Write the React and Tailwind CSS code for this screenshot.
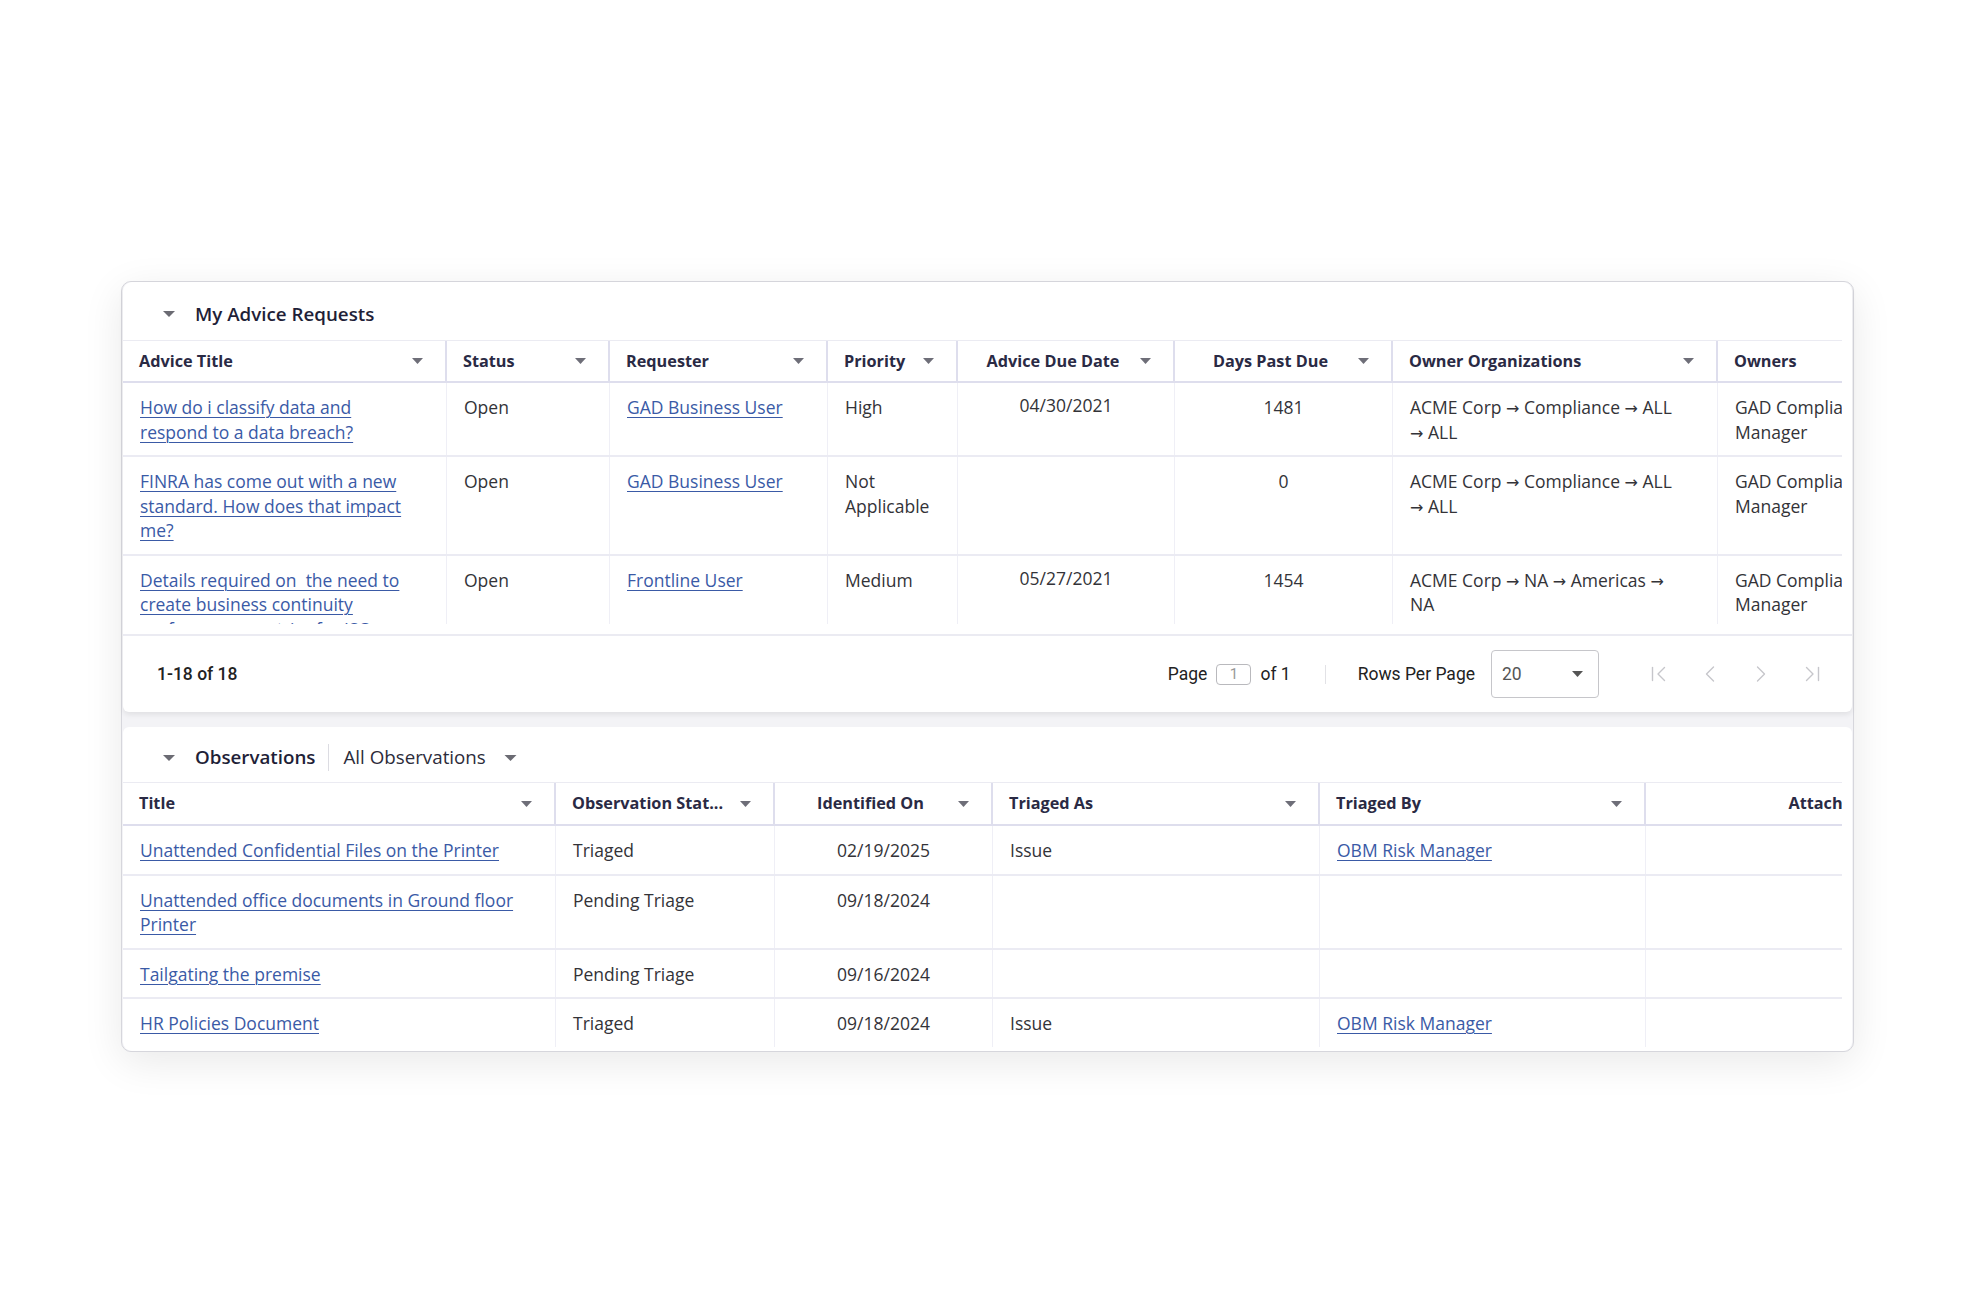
import { ChevronLeft, ChevronRight } from "lucide-react";

const adviceCols = "grid grid-cols-[324px_163px_218px_130px_217px_218px_325px_200px] w-[1795px]";
const obsCols = "grid grid-cols-[433px_219px_218px_327px_326px_270px] w-[1793px]";

const adviceHeaders = [
  { label: "Advice Title", sort: true },
  { label: "Status", sort: true },
  { label: "Requester", sort: true },
  { label: "Priority", sort: true },
  { label: "Advice Due Date", sort: true, align: "center" },
  { label: "Days Past Due", sort: true, align: "center" },
  { label: "Owner Organizations", sort: true },
  { label: "Owners", sort: false },
];

const adviceRows = [
  {
    title: "How do i classify data and respond to a data breach?",
    status: "Open",
    requester: "GAD Business User",
    priority: "High",
    due: "04/30/2021",
    days: "1481",
    org: ["ACME Corp", "Compliance", "ALL", "ALL"],
    owners: "GAD Compliance Manager",
  },
  {
    title: "FINRA has come out with a new standard. How does that impact me?",
    status: "Open",
    requester: "GAD Business User",
    priority: "Not Applicable",
    due: "",
    days: "0",
    org: ["ACME Corp", "Compliance", "ALL", "ALL"],
    owners: "GAD Compliance Manager",
  },
  {
    title: "Details required on\u00a0 the need to create business continuity performance metrics for ISO 22301",
    status: "Open",
    requester: "Frontline User",
    priority: "Medium",
    due: "05/27/2021",
    days: "1454",
    org: ["ACME Corp", "NA", "Americas", "NA"],
    owners: "GAD Compliance Manager",
  },
];

const obsHeaders = [
  { label: "Title", sort: true },
  { label: "Observation Stat...", sort: true },
  { label: "Identified On", sort: true, align: "center" },
  { label: "Triaged As", sort: true },
  { label: "Triaged By", sort: true },
  { label: "Attachments", sort: false, align: "right" },
];

const obsRows = [
  { title: "Unattended Confidential Files on the Printer", status: "Triaged", date: "02/19/2025", as: "Issue", by: "OBM Risk Manager" },
  { title: "Unattended office documents in Ground floor Printer", status: "Pending Triage", date: "09/18/2024", as: "", by: "" },
  { title: "Tailgating the premise", status: "Pending Triage", date: "09/16/2024", as: "", by: "" },
  { title: "HR Policies Document", status: "Triaged", date: "09/18/2024", as: "Issue", by: "OBM Risk Manager" },
];

function SortArrow() {
  return (
    <svg width="11" height="6" viewBox="0 0 11 6" className="shrink-0">
      <path d="M0 0h11L5.5 6z" fill="#6e6e78" />
    </svg>
  );
}

function Caret({ w = 12 }) {
  return (
    <svg width={w} height="6" viewBox="0 0 12 6" className="shrink-0">
      <path d="M0 0h12L6 6z" fill="#6b6b73" />
    </svg>
  );
}

function HeaderCell({ label, sort, align, last }) {
  const alignCls = align === "center" ? "text-center" : align === "right" ? "text-right" : "text-left";
  return (
    <div className={`flex items-center gap-2 pl-[16px] pr-[22px] ${last ? "" : "border-r-2 border-[#dedeed]"}`}>
      <span className={`flex-1 whitespace-nowrap ${alignCls}`}>{label}</span>
      {sort && <SortArrow />}
    </div>
  );
}

function Link({ children }) {
  return <a href="#" className="text-[#3a5aa6] underline underline-offset-[3px] decoration-1">{children}</a>;
}

function Cell({ children, center, last, wide, tight }) {
  const pr = wide ? "pr-[40px]" : tight ? "pr-[36px]" : "pr-[22px]";
  return (
    <div
      className={`pt-[12px] pb-[11px] ${center ? "text-center" : `pl-[17px] ${pr}`} ${last ? "" : "border-r border-[#efeff6]"}`}
    >
      {children}
    </div>
  );
}

// org path with the long arrow glyph
function OrgPath({ parts }) {
  return (
    <>
      {parts.map((p, i) => (
        <span key={i}>
          {i > 0 && (
            <>
              {" "}
              <span className="font-['DejaVu_Sans',sans-serif] text-[16px] leading-none">→</span>{" "}
            </>
          )}
          {p}
        </span>
      ))}
    </>
  );
}

function IconFirst() {
  return (
    <svg width="16" height="16" viewBox="0 0 16 16" fill="none" stroke="#c6c6cb" strokeWidth="1.4" strokeLinecap="round" strokeLinejoin="round">
      <path d="M1.5 1.5v13" />
      <path d="M13.5 1.5L7 8l6.5 6.5" />
    </svg>
  );
}

function IconLast() {
  return (
    <svg width="16" height="16" viewBox="0 0 16 16" fill="none" stroke="#c6c6cb" strokeWidth="1.4" strokeLinecap="round" strokeLinejoin="round">
      <path d="M14.5 1.5v13" />
      <path d="M2.5 1.5L9 8l-6.5 6.5" />
    </svg>
  );
}

export default function App() {
  return (
    <div className="min-h-screen bg-white pt-[281px] font-['Open_Sans',sans-serif]">
      <div className="mx-auto w-[1733px] rounded-[10px] border border-[#d6d6dc] bg-[#f3f3f6] px-px shadow-[0_10px_40px_rgba(0,0,0,0.09)]">
        {/* My Advice Requests */}
        <div className="rounded-t-[9px] rounded-b-[6px] bg-white shadow-[0_3px_5px_rgba(0,0,0,0.07)]">
          <div className="flex h-[58px] items-center gap-[20px] pl-[40px] pt-[6px]">
            <Caret />
            <span className="text-[18.75px] font-semibold text-[#1f1f38]">My Advice Requests</span>
          </div>

          <div className="mr-[10px] h-[284px] overflow-hidden">
            <div className={`${adviceCols} h-[43px] border-t border-b-2 border-t-[#ebebf2] border-b-[#dedeed] text-[16.25px] font-bold text-[#2a2a44]`}>
              {adviceHeaders.map((h, i) => (
                <HeaderCell key={h.label} {...h} last={i === adviceHeaders.length - 1} />
              ))}
            </div>
            {adviceRows.map((r) => (
              <div key={r.title} className={`${adviceCols} border-b-2 border-[#ebebf3] text-[17.5px] leading-[24.5px] text-[#333338]`}>
                <Cell wide><Link>{r.title}</Link></Cell>
                <Cell>{r.status}</Cell>
                <Cell><Link>{r.requester}</Link></Cell>
                <Cell>{r.priority}</Cell>
                <Cell center>
                  <span className="relative -top-[2px]">{r.due}</span>
                </Cell>
                <Cell center>{r.days}</Cell>
                <Cell tight><OrgPath parts={r.org} /></Cell>
                <Cell last>{r.owners}</Cell>
              </div>
            ))}
          </div>
          <div className="h-[10px]" />

          {/* pagination */}
          <div className="flex h-[78px] items-center border-t-2 border-[#ebebf2] pl-[34px] pr-[15px] font-['Roboto',sans-serif] text-[17.5px] text-[#222]">
            <span className="font-medium">1-18 of 18</span>
            <div className="ml-auto flex items-center">
              <span>Page</span>
              <span className="ml-[9px] flex h-[21px] w-[35px] items-center justify-center rounded-[4px] border border-[#b9b9bd] text-[15px] text-[#999]">1</span>
              <span className="ml-[9px]">of 1</span>
              <span className="ml-[34px] h-[19px] w-px bg-[#e2e2e6]" />
              <span className="ml-[32px]">Rows Per Page</span>
              <div className="ml-[16px] flex h-[48px] w-[108px] items-center justify-between rounded-[4px] border border-[#c6c6ca] pl-[10px] pr-[15px] text-[#555]">
                <span>20</span>
                <svg width="11" height="6" viewBox="0 0 11 6">
                  <path d="M0 0h11L5.5 6z" fill="#555" />
                </svg>
              </div>
              <div className="ml-[34px] flex items-center">
                <button className="flex h-[30px] w-[51px] items-center justify-center"><IconFirst /></button>
                <button className="flex h-[30px] w-[51px] items-center justify-center"><ChevronLeft size={28} strokeWidth={1.2} color="#c6c6cb" /></button>
                <button className="flex h-[30px] w-[51px] items-center justify-center"><ChevronRight size={28} strokeWidth={1.2} color="#c6c6cb" /></button>
                <button className="flex h-[30px] w-[51px] items-center justify-center"><IconLast /></button>
              </div>
            </div>
          </div>
        </div>

        {/* Observations */}
        <div className="mt-[15px] rounded-t-[6px] rounded-b-[9px] bg-white pb-[4px]">
          <div className="flex h-[55px] items-center pl-[40px] pt-[6px]">
            <Caret />
            <span className="ml-[20px] text-[18.75px] font-semibold text-[#1f1f38]">Observations</span>
            <span className="ml-[13px] h-[27px] w-px bg-[#dcdce2]" />
            <span className="ml-[14px] text-[18.75px] text-[#2c2c3a]">All Observations</span>
            <span className="ml-[18px]">
              <Caret w={13} />
            </span>
          </div>

          <div className="mr-[10px] overflow-hidden">
            <div className={`${obsCols} h-[44px] border-t border-b-2 border-t-[#ebebf2] border-b-[#dedeed] text-[16.25px] font-bold text-[#2a2a44]`}>
              {obsHeaders.map((h, i) => (
                <HeaderCell key={h.label} {...h} last={i === obsHeaders.length - 1} />
              ))}
            </div>
            {obsRows.map((r, i) => (
              <div
                key={r.title}
                className={`${obsCols} ${i === obsRows.length - 1 ? "" : "border-b-2 border-[#ebebf3]"} text-[17.5px] leading-[24.5px] text-[#333338]`}
              >
                <Cell><Link>{r.title}</Link></Cell>
                <Cell>{r.status}</Cell>
                <Cell center>{r.date}</Cell>
                <Cell>{r.as}</Cell>
                <Cell>{r.by && <Link>{r.by}</Link>}</Cell>
                <Cell last />
              </div>
            ))}
          </div>
        </div>
      </div>
    </div>
  );
}
